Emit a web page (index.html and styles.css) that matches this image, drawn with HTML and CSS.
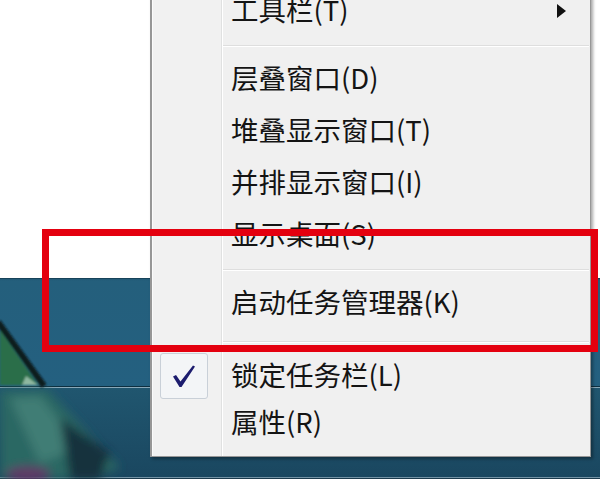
FILE: index.html
```html
<!DOCTYPE html>
<html lang="zh-CN">
<head>
<meta charset="utf-8">
<title>任务栏右键菜单</title>
<link rel="stylesheet" href="styles.css">
</head>
<body>
<div class="screen">
  <div class="desk"></div>
  <div class="taskbar">
    <div class="tb-upper"></div>
    <div class="tb-line"></div>
    <div class="tb-lower"></div>
    <div class="tb-bottom"></div>
  </div>

  <svg class="art" width="170" height="201" viewBox="0 0 170 201" aria-hidden="true">
    <defs>
      <filter id="soft" x="-20%" y="-20%" width="140%" height="140%"><feGaussianBlur stdDeviation="5"/></filter>
      <filter id="soft2" x="-20%" y="-20%" width="140%" height="140%"><feGaussianBlur stdDeviation="1.2"/></filter>
    </defs>
    <g filter="url(#soft)">
      <polygon points="0,112 48,112 120,190 90,201 0,201" fill="#2c6764"/>
      <polygon points="10,120 40,118 80,170 40,185" fill="#3f7d74"/>
      <ellipse cx="28" cy="196" rx="22" ry="8" fill="#5e3a66"/>
      <polygon points="60,140 110,175 100,201 70,201" fill="#16303c"/>
    </g>
    <g filter="url(#soft2)">
      <polygon points="0,52 38,107 0,107" fill="#2a6e4a"/>
      <polygon points="26,98 38,107 22,107" fill="#8fb8a0"/>
      <line x1="-2" y1="44" x2="44" y2="108" stroke="#0b1a1c" stroke-width="6"/>
    </g>
  </svg>

  <div class="menu">
    <div class="item">
      <span class="gut"></span>
      <span class="label">工具栏(T)</span>
      <span class="arrow"></span>
    </div>
    <div class="sep"></div>
    <div class="item"><span class="gut"></span><span class="label">层叠窗口(D)</span></div>
    <div class="item"><span class="gut"></span><span class="label">堆叠显示窗口(T)</span></div>
    <div class="item"><span class="gut"></span><span class="label">并排显示窗口(I)</span></div>
    <div class="item"><span class="gut"></span><span class="label">显示桌面(S)</span></div>
    <div class="sep"></div>
    <div class="item"><span class="gut"></span><span class="label">启动任务管理器(K)</span></div>
    <div class="sep sep-wide"></div>
    <div class="item item-check">
      <span class="gut">
        <span class="checkbox">
          <svg width="26" height="26" viewBox="0 0 26 26" aria-hidden="true">
            <path d="M2 13.5 L5 12 L9.5 18.5 L22 2.5 L24 3.5 L10.5 24 L8.5 24 Z" fill="#1c1c6e"/>
          </svg>
        </span>
      </span>
      <span class="label">锁定任务栏(L)</span>
    </div>
    <div class="item item-last"><span class="gut"></span><span class="label">属性(R)</span></div>
  </div>

  <div class="highlight"></div>
</div>
</body>
</html>
```

FILE: styles.css
```css
html, body {
  margin: 0;
  padding: 0;
}

body {
  width: 600px;
  height: 479px;
  overflow: hidden;
  background: #ffffff;
  font-family: "Noto Sans CJK SC", "Noto Sans", sans-serif;
}

.screen {
  position: relative;
  width: 600px;
  height: 479px;
  overflow: hidden;
  display: flex;
  flex-direction: column;
}

.desk {
  height: 278px;
  background: #ffffff;
  flex: none;
}

.taskbar {
  flex: 1;
  display: flex;
  flex-direction: column;
}

.tb-upper {
  height: 108px;
  background: linear-gradient(to bottom, #1f5674 0, #245f7c 3px, #246080 100%);
  box-shadow: inset 0 1px #17435a;
}

.tb-line {
  height: 2px;
  background: linear-gradient(to bottom, #0d2f40 0 1px, #8aa8b8 1px 2px);
}

.tb-lower {
  flex: 1;
  background: linear-gradient(to bottom, #20566f, #1a4760);
}

.tb-bottom {
  height: 2px;
  background: linear-gradient(to bottom, #7494a6 0 1px, #1b3a4c 1px 2px);
}

.art {
  position: absolute;
  left: 0;
  top: 278px;
}

.menu {
  position: absolute;
  left: 150px;
  top: -16px;
  width: 441px;
  box-sizing: border-box;
  padding-bottom: 9px;
  border: 1px solid #979797;
  border-left-width: 2px;
  background: linear-gradient(to right, #f1f1f1 0 69px, #e0e1e1 69px 70px, #ffffff 70px 71px, #f0f0f0 71px);
  box-shadow: 2px 2px 3px rgba(0, 0, 0, 0.35), inset 1px 1px #fbfbfb;
  display: flex;
  flex-direction: column;
  color: #141414;
  font-size: 27.5px;
}

.item {
  height: 52px;
  display: flex;
  align-items: center;
}

.item-check {
  height: 46px;
}

.item-last {
  height: 48px;
}

.gut {
  width: 71px;
  flex: none;
  align-self: stretch;
  display: flex;
  align-items: center;
}

.label {
  padding-left: 8px;
  line-height: 1;
  white-space: nowrap;
  position: relative;
  top: -1px;
}

.arrow {
  margin-left: auto;
  margin-right: 24px;
  width: 0;
  height: 0;
  border-top: 7px solid transparent;
  border-bottom: 7px solid transparent;
  border-left: 9px solid #111111;
}

.sep {
  height: 16px;
  margin-left: 71px;
  margin-right: 1px;
  display: flex;
  align-items: center;
}

.sep::before {
  content: "";
  flex: 1;
  height: 1px;
  background: #dedede;
  box-shadow: 0 1px #ffffff;
}

.sep-wide {
  height: 24px;
}

.checkbox {
  margin-left: 8px;
  width: 48px;
  height: 46px;
  box-sizing: border-box;
  border: 1px solid #c9d0d8;
  border-radius: 3px;
  background: #f3f5f7;
  display: flex;
  align-items: center;
  justify-content: center;
}

.highlight {
  position: absolute;
  left: 42px;
  top: 229px;
  width: 556px;
  height: 123px;
  box-sizing: border-box;
  border: 7px solid #e4000f;
}
```
